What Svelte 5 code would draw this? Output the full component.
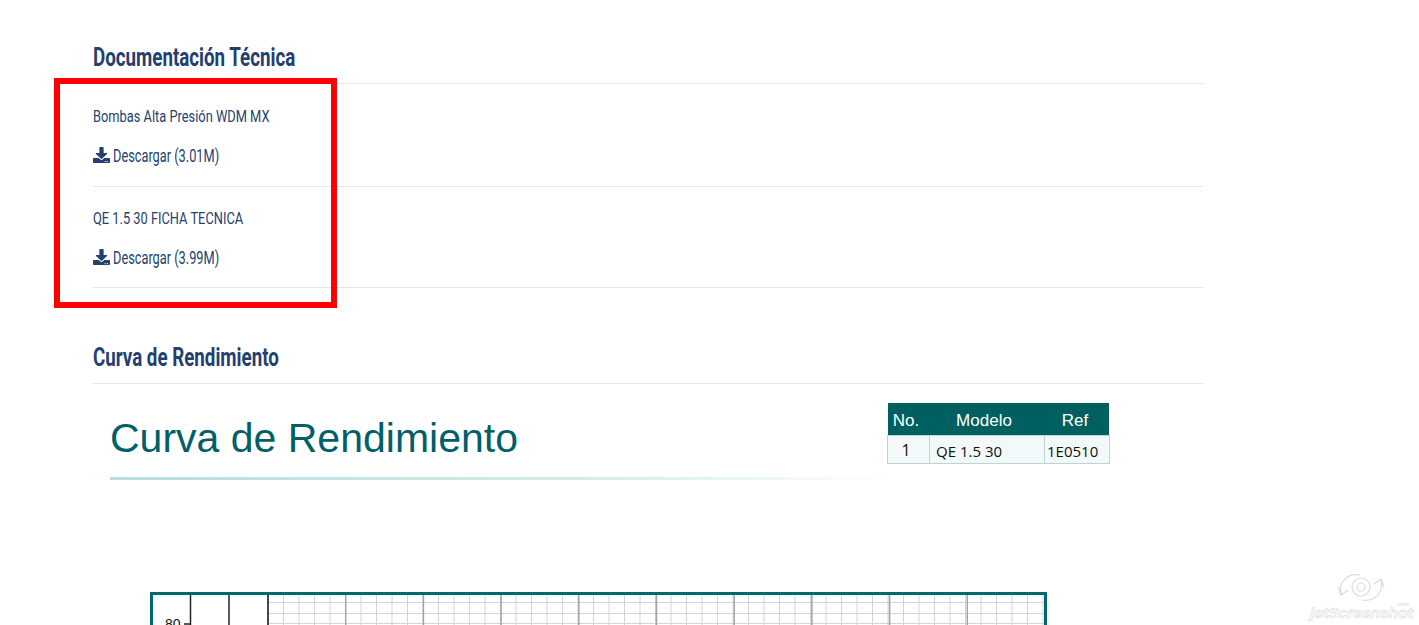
<script>
  const docs = [
    { title: 'Bombas Alta Presión WDM MX', size: '3.01M' },
    { title: 'QE 1.5 30 FICHA TECNICA', size: '3.99M' }
  ];
  const minor = [];
  for (let x = 268; x < 1044; x += 15.5) minor.push(x);
  const major = [];
  for (let x = 268; x < 1044; x += 77.7) major.push(x);
</script>

<main class="page">
  <section class="docs">
    <h2><span class="sq h">Documentación Técnica</span></h2>
    {#each docs as d}
      <div class="doc">
        <p class="name"><span class="sq n">{d.title}</span></p>
        <a class="dl" href="#top">
          <svg class="ico" viewBox="0 0 512 512" preserveAspectRatio="none" aria-hidden="true"><path d="M216 0h80c13 0 24 11 24 24v168h88c18 0 27 21 14 34L270 379c-8 8-20 8-28 0L90 226c-13-13-4-34 14-34h88V24c0-13 11-24 24-24zm296 376v112c0 13-11 24-24 24H24c-13 0-24-11-24-24V376c0-13 11-24 24-24h147l49 49c20 20 52 20 72 0l49-49h147c13 0 24 11 24 24zM388 464c0-11-9-20-20-20s-20 9-20 20 9 20 20 20 20-9 20-20zm64 0c0-11-9-20-20-20s-20 9-20 20 9 20 20 20 20-9 20-20z"/></svg>
          <span class="sq d">Descargar ({d.size})</span>
        </a>
      </div>
    {/each}
    <div class="mark" aria-hidden="true"></div>
  </section>

  <section class="curve">
    <h2><span class="sq h">Curva de Rendimiento</span></h2>
    <svg class="chart" viewBox="93 384 1110 241" width="1110" height="241">
      <defs>
        <linearGradient id="fade" x1="0" x2="1" y1="0" y2="0">
          <stop offset="0" stop-color="#b2dfdc" />
          <stop offset="0.6" stop-color="#d3ecea" />
          <stop offset="1" stop-color="#ffffff" />
        </linearGradient>
      </defs>
      <text x="110" y="452" class="big">Curva de Rendimiento</text>
      <rect x="110" y="477" width="785" height="3" fill="url(#fade)" />

      <rect x="888" y="403" width="221" height="32" fill="#006060" />
      <rect x="887.5" y="435.5" width="222" height="28" fill="#f2f9f8" stroke="#b9d6d6" />
      <line x1="929.5" x2="929.5" y1="435" y2="463" stroke="#b9d6d6" />
      <line x1="1044.5" x2="1044.5" y1="435" y2="463" stroke="#b9d6d6" />
      <text x="906" y="426" class="th" text-anchor="middle">No.</text>
      <text x="984" y="426" class="th" text-anchor="middle">Modelo</text>
      <text x="1075" y="426" class="th" text-anchor="middle">Ref</text>
      <text x="906" y="456" class="td one" text-anchor="middle">1</text>
      <text x="936" y="457" class="td">QE 1.5 30</text>
      <text x="1047" y="457" class="td">1E0510</text>

      <g stroke="#d4d4d4" stroke-width="1">
        {#each minor as x}<line x1={x} x2={x} y1="594" y2="625" />{/each}
        <line x1="268" x2="1044" y1="602.5" y2="602.5" />
        <line x1="268" x2="1044" y1="613.5" y2="613.5" />
        <line x1="268" x2="1044" y1="623.5" y2="623.5" />
      </g>
      <g stroke="#a3a3a3" stroke-width="1.5">
        {#each major as x}<line x1={x} x2={x} y1="594" y2="625" />{/each}
      </g>
      <g stroke="#222" stroke-width="1.5">
        <line x1="190.5" x2="190.5" y1="594" y2="625" />
        <line x1="229" x2="229" y1="594" y2="625" />
        <line x1="268" x2="268" y1="594" y2="625" />
        <line x1="184" x2="190" y1="624" y2="624" />
      </g>
      <path d="M151.5 625V593.5H1045.5V625" fill="none" stroke="#006a6c" stroke-width="3" />
      <text x="165" y="629" class="tick">80</text>

      <g class="wm" fill="none" stroke="#dcdcdc" stroke-width="1.2">
        <circle cx="1361" cy="587" r="4" />
        <circle cx="1361" cy="587" r="9" />
        <path d="M1341 594c-3-11 6-21 19-19M1381 581c3 11-6 21-19 19M1338 587l3 8 7-5M1384 587l-3-8-7 5" />
      </g>
      <text x="1310" y="618" class="wmt" textLength="103" lengthAdjust="spacingAndGlyphs">jetScreenshot</text>
      <text x="1396" y="606" class="wmc">.com</text>
    </svg>
  </section>
</main>

<style>
  :global(body) {
    margin: 0;
    background: #fff;
    overflow: hidden;
  }
  .page {
    height: 625px;
    overflow: hidden;
    padding: 0 216px 0 93px;
    font-family: "Roboto", sans-serif;
    color: #243f70;
  }
  .sq {
    display: inline-block;
    transform-origin: left center;
    white-space: nowrap;
  }
  .sq.h { transform: scaleX(0.75); }
  .sq.n { transform: scaleX(0.755); }
  .sq.d { transform: scaleX(0.71); }
  h2 {
    margin: 0;
    font-size: 25px;
    line-height: 28px;
    font-weight: 700;
    color: #243f70;
    padding-top: 1px;
    padding-bottom: 11px;
    border-bottom: 1px solid #e5e5e5;
  }
  .docs {
    position: relative;
    padding-top: 43px;
  }
  .doc {
    padding-top: 22px;
    height: 80px;
    border-bottom: 1px solid #e5e5e5;
  }
  .doc + .doc {
    padding-top: 21px;
    height: 79px;
  }
  .name {
    margin: 0;
    font-size: 17px;
    line-height: 20px;
  }
  .dl {
    display: flex;
    align-items: center;
    gap: 3px;
    margin-top: 20px;
    font-size: 18px;
    line-height: 20px;
    color: #243f70;
    text-decoration: none;
  }
  .ico {
    width: 17px;
    height: 16px;
    fill: #243f70;
    flex: none;
    margin-top: -2px;
  }
  .mark {
    position: absolute;
    left: -39px;
    top: 78px;
    width: 271px;
    height: 218px;
    border: 6px solid #ff0000;
  }
  .curve {
    padding-top: 55px;
  }
  .chart {
    display: block;
    overflow: visible;
  }
  .big {
    font-family: "Liberation Sans", sans-serif;
    font-size: 41px;
    fill: #005f68;
  }
  .th {
    font-family: "Liberation Sans", sans-serif;
    font-size: 17px;
    fill: #ffffff;
  }
  .td {
    font-family: "Open Sans", sans-serif;
    font-size: 15px;
    fill: #111;
  }
  .one {
    font-size: 16px;
  }
  .tick {
    font-family: "Liberation Sans", sans-serif;
    font-size: 14px;
    fill: #111;
  }
  .wmt {
    font-family: "Liberation Sans", sans-serif;
    font-style: italic;
    font-weight: 700;
    font-size: 14px;
    fill: #fff;
    stroke: #dcdcdc;
    stroke-width: 0.6;
  }
  .wmc {
    font-family: "Liberation Sans", sans-serif;
    font-size: 6px;
    fill: #fff;
    stroke: #dcdcdc;
    stroke-width: 0.3;
  }
</style>
